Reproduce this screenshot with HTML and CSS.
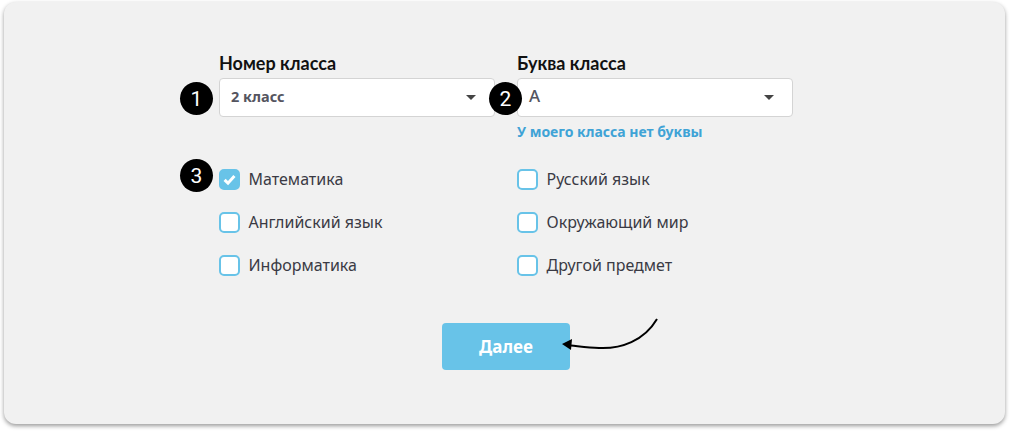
FILE: index.html
```html
<!DOCTYPE html>
<html lang="en">
<head>
    <meta charset="UTF-8">
    <meta name="viewport" content="width=device-width, initial-scale=1.0">
    <title>Выбор класса</title>
    <link rel="stylesheet" href="styles.css">
</head>
<body>

    <div class="card">
        <div class="selects">
            <div class="field">
                <label class="field-label">Номер класса</label>
                <div class="select">
                    <span>2 класс</span>
                    <span class="caret"></span>
                </div>
                <span class="badge badge-one">1</span>
            </div>
            <div class="field">
                <label class="field-label">Буква класса</label>
                <div class="select select-letter">
                    <span>А</span>
                    <span class="caret"></span>
                </div>
                <a class="no-letter">У моего класса нет буквы</a>
                <span class="badge badge-two">2</span>
            </div>
        </div>

        <div class="subjects">
            <span class="badge badge-three">3</span>
            <div class="subject">
                <span class="box checked">
                    <svg width="15" height="15" viewBox="0 0 14 14"><path d="M2.400 7.400 5.600 10.400 11.600 3.800" fill="none" stroke="#fff" stroke-width="2.800"/></svg>
                </span>
                Математика
            </div>
            <div class="subject"><span class="box"></span>Русский язык</div>
            <div class="subject"><span class="box"></span>Английский язык</div>
            <div class="subject"><span class="box"></span>Окружающий мир</div>
            <div class="subject"><span class="box"></span>Информатика</div>
            <div class="subject"><span class="box"></span>Другой предмет</div>
        </div>

        <div class="actions">
            <button class="next">Далее</button>
            <svg class="arrow" width="100" height="40" viewBox="0 0 100 40">
                <path d="M98 2C85 24 62 32 40 31 30 30.500 22 29.500 12 28.500" fill="none" stroke="#000" stroke-width="2"/>
                <path d="M3 27 13 22 12 33Z" fill="#000"/>
            </svg>
        </div>
    </div>

</body>
</html>
```

FILE: styles.css
```css
* {
    margin: 0;
    padding: 0;
    box-sizing: border-box;
}

body {
    width: 1010px;
    height: 432px;
    padding: 2px 5px 8px 4px;
    background-color: #fff;
    font-family: 'Noto Sans', sans-serif;
    overflow: hidden;
}

.card {
    height: 422px;
    padding: 50px 0 0 215px;
    background: #f1f1f1;
    border-radius: 12px;
    box-shadow: 0 2px 4px rgba(0, 0, 0, 0.4);
}

.selects,
.subjects {
    display: grid;
    grid-template-columns: 276px 276px;
    column-gap: 22px;
    position: relative;
}

.field {
    position: relative;
}

.field-label {
    display: block;
    height: 26px;
    font-family: 'Lato', sans-serif;
    font-size: 18px;
    font-weight: 700;
    line-height: 22px;
    color: #111;
}

.select {
    display: flex;
    justify-content: space-between;
    align-items: center;
    height: 39px;
    padding: 0 18px 4px 11px;
    background: #fff;
    border: 1px solid #d4d4d4;
    border-radius: 4px;
    font-size: 14.500px;
    font-weight: 700;
    color: #55555f;
}

.select-letter {
    font-weight: 500;
    font-size: 17px;
}

.caret {
    width: 0;
    height: 0;
    margin-top: 4px;
    border-left: 5px solid transparent;
    border-right: 5px solid transparent;
    border-top: 5px solid #444;
}

.no-letter {
    display: block;
    margin-top: 6px;
    font-size: 14px;
    font-weight: 700;
    line-height: 18px;
    color: #3fa3d6;
}

.badge {
    position: absolute;
    display: flex;
    justify-content: center;
    align-items: center;
    width: 33px;
    height: 33px;
    background: #000;
    border-radius: 50%;
    color: #fff;
    font-family: 'Roboto', sans-serif;
    font-size: 21px;
    font-weight: 400;
}

.badge-one {
    left: -39px;
    top: 30px;
}

.badge-two {
    left: -28px;
    top: 30px;
}

.badge-three {
    left: -39px;
    top: -4px;
}

.subjects {
    margin-top: 22px;
    row-gap: 11px;
}

.subject {
    display: flex;
    align-items: center;
    gap: 8.500px;
    height: 32px;
    font-size: 16px;
    color: #3a3a44;
}

.box {
    display: flex;
    justify-content: center;
    align-items: center;
    width: 21px;
    height: 21px;
    background: #fff;
    border: 2px solid #68c3e8;
    border-radius: 5px;
}

.box.checked {
    background: #68c3e8;
}

.actions {
    position: relative;
    margin-top: 42px;
    padding-left: 223px;
}

.next {
    width: 128px;
    height: 47px;
    background: #68c3e8;
    border: none;
    border-radius: 4px;
    color: #fff;
    font-family: 'Noto Sans', sans-serif;
    font-size: 17px;
    font-weight: 700;
}

.arrow {
    position: absolute;
    left: 340px;
    top: -6px;
}
```
